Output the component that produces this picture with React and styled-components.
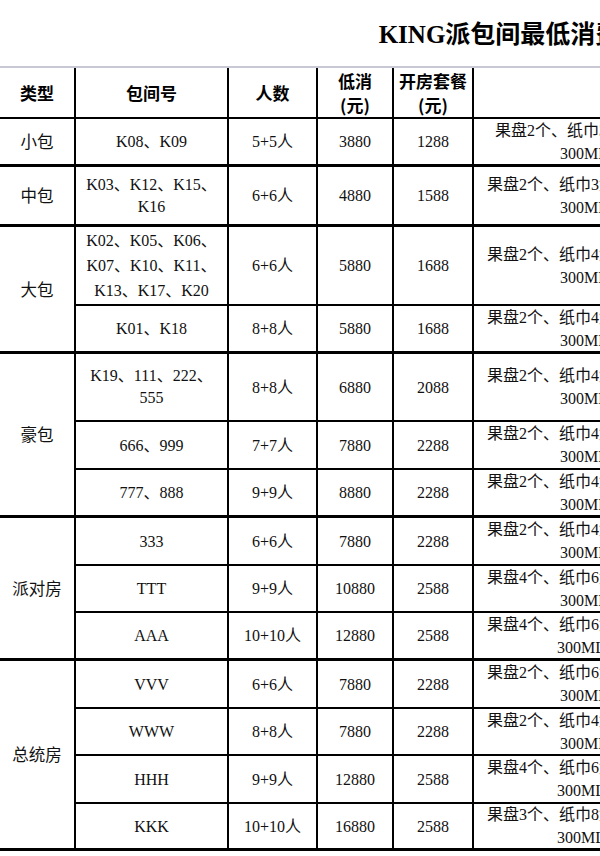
import React from 'react';
import styled, { createGlobalStyle } from 'styled-components';

const Global = createGlobalStyle`
  html, body { margin: 0; padding: 0; background: #fff; }
  body { width: 600px; height: 856px; overflow: hidden; }
`;

const Page = styled.div`
  width: 1048px;
  font-family: "Liberation Serif", "Noto Sans CJK SC", serif;
  color: #111;
`;

const Title = styled.h1`
  margin: 0 0 16px;
  padding: 20px 24px 0 0;
  font-size: 25px;
  line-height: 30px;
  font-weight: 700;
  text-align: center;
  white-space: nowrap;
  color: #000;
  font-family: "Liberation Serif", "Noto Sans CJK SC", serif;
`;

const Sheet = styled.div`
  display: grid;
  grid-template-columns: 76px 153px 89px 76px 80px 574px;
  grid-template-rows: 51px 48px 60px 79px 48px 68px 48px 48px 48px 47px 48px 48px 47px 48px 47px;
  border-top: 2px solid #c9c9d6;
`;

const Cell = styled.div`
  box-sizing: border-box;
  display: flex;
  align-items: center;
  justify-content: center;
  text-align: center;
  grid-row: span ${(p) => p.$span || 1};
  border-right: 2px solid #000;
  border-bottom: ${(p) => (p.$end ? 3 : 2)}px solid #000;
  font-size: 16px;
  line-height: ${(p) => p.$lh || 23}px;
  white-space: pre-line;
`;

const TypeCell = styled(Cell)`
  font-family: "Noto Sans CJK SC", sans-serif;
  font-size: 16.5px;
`;

const HeadCell = styled(Cell)`
  font-family: "Noto Sans CJK SC", sans-serif;
  font-weight: 700;
  font-size: 17px;
  color: #000;
  line-height: 24px;
  border-right: ${(p) => (p.$last ? 'none' : '2px solid #000')};
`;

const DescCell = styled(Cell)`
  flex-direction: column;
  align-items: flex-start;
  justify-content: center;
  text-align: left;
  white-space: nowrap;
  overflow: hidden;
  border-right: none;
`;

const DescLine = styled.span`
  display: block;
  padding-left: ${(p) => p.$indent}px;
`;

const d = (fruit, tissue, i1, i2) => ({
  l1: `果盘${fruit}个、纸巾${tissue}盒、小吃4份、爆米花2份、矿泉水6瓶、`,
  l2: '300ML饮料12瓶',
  i1,
  i2,
});

const groups = [
  {
    type: '小包',
    rows: [{ rooms: 'K08、K09', people: '5+5人', min: '3880', pkg: '1288', desc: d(2, 3, 21, 86) }],
  },
  {
    type: '中包',
    rows: [{ rooms: 'K03、K12、K15、\nK16', people: '6+6人', min: '4880', pkg: '1588', lh: 22, desc: d(2, 3, 13, 86) }],
  },
  {
    type: '大包',
    rows: [
      { rooms: 'K02、K05、K06、\nK07、K10、K11、\nK13、K17、K20', people: '6+6人', min: '5880', pkg: '1688', lh: 25, desc: d(2, 4, 13, 86) },
      { rooms: 'K01、K18', people: '8+8人', min: '5880', pkg: '1688', desc: d(2, 4, 13, 86) },
    ],
  },
  {
    type: '豪包',
    rows: [
      { rooms: 'K19、111、222、\n555', people: '8+8人', min: '6880', pkg: '2088', lh: 22, desc: d(2, 4, 13, 86) },
      { rooms: '666、999', people: '7+7人', min: '7880', pkg: '2288', desc: d(2, 4, 13, 86) },
      { rooms: '777、888', people: '9+9人', min: '8880', pkg: '2288', desc: d(2, 4, 13, 86) },
    ],
  },
  {
    type: '派对房',
    rows: [
      { rooms: '333', people: '6+6人', min: '7880', pkg: '2288', desc: d(2, 4, 13, 86) },
      { rooms: 'TTT', people: '9+9人', min: '10880', pkg: '2588', desc: d(4, 6, 13, 86) },
      { rooms: 'AAA', people: '10+10人', min: '12880', pkg: '2588', desc: d(4, 6, 13, 83) },
    ],
  },
  {
    type: '总统房',
    rows: [
      { rooms: 'VVV', people: '6+6人', min: '7880', pkg: '2288', desc: d(2, 6, 13, 86) },
      { rooms: 'WWW', people: '8+8人', min: '7880', pkg: '2288', desc: d(2, 4, 13, 86) },
      { rooms: 'HHH', people: '9+9人', min: '12880', pkg: '2588', desc: d(4, 6, 13, 83) },
      { rooms: 'KKK', people: '10+10人', min: '16880', pkg: '2588', desc: d(3, 8, 13, 83) },
    ],
  },
];

export default function App() {
  return (
    <Page>
      <Global />
      <Title>KING派包间最低消费表</Title>
      <Sheet>
        <HeadCell>类型</HeadCell>
        <HeadCell>包间号</HeadCell>
        <HeadCell>人数</HeadCell>
        <HeadCell>{'低消\n(元)'}</HeadCell>
        <HeadCell>{'开房套餐\n(元)'}</HeadCell>
        <HeadCell $last>包含内容</HeadCell>
        {groups.map((g) => (
          <React.Fragment key={g.type}>
            <TypeCell $span={g.rows.length} $end>
              {g.type}
            </TypeCell>
            {g.rows.map((r, i) => {
              const end = i === g.rows.length - 1;
              return (
                <React.Fragment key={r.rooms}>
                  <Cell $end={end} $lh={r.lh}>{r.rooms}</Cell>
                  <Cell $end={end}>{r.people}</Cell>
                  <Cell $end={end}>{r.min}</Cell>
                  <Cell $end={end}>{r.pkg}</Cell>
                  <DescCell $end={end}>
                    <DescLine $indent={r.desc.i1}>{r.desc.l1}</DescLine>
                    <DescLine $indent={r.desc.i2}>{r.desc.l2}</DescLine>
                  </DescCell>
                </React.Fragment>
              );
            })}
          </React.Fragment>
        ))}
      </Sheet>
    </Page>
  );
}
